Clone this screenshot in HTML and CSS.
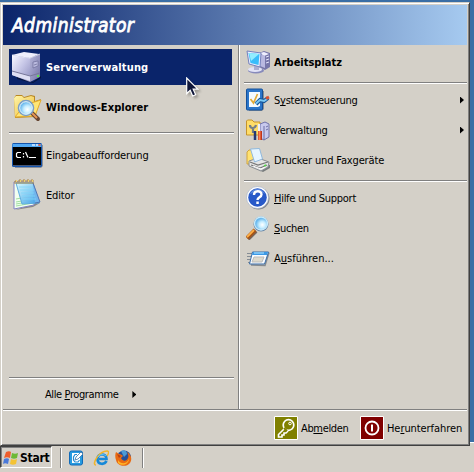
FILE: index.html
```html
<!DOCTYPE html>
<html lang="de">
<head>
<meta charset="utf-8">
<title>Startmenü</title>
<link rel="stylesheet" href="styles.css">
</head>
<body>
<svg class="defs" width="0" height="0" aria-hidden="true">
  <defs>
    <linearGradient id="silver" x2="1" y2="1"><stop stop-color="#f8f8ff"/><stop offset=".5" stop-color="#c5c5e6"/><stop offset="1" stop-color="#8f8fbe"/></linearGradient>
    <linearGradient id="side" x2="1" y2="1"><stop stop-color="#b7b7da"/><stop offset="1" stop-color="#7474a6"/></linearGradient>
    <linearGradient id="gold" x2="1" y2="1"><stop stop-color="#fff5a8"/><stop offset="1" stop-color="#eebc3a"/></linearGradient>
    <linearGradient id="sky" x2="1" y2="1"><stop stop-color="#d9faff"/><stop offset="1" stop-color="#329be9"/></linearGradient>
    <radialGradient id="lens" cx=".6" cy=".6"><stop stop-color="#fff"/><stop offset=".5" stop-color="#c5edff"/><stop offset="1" stop-color="#69b8ee"/></radialGradient>
  </defs>
</svg>
<main class="menu">
  <header class="user">Administrator</header>
  <div class="columns">
    <nav class="programs">
      <a class="program selected">
        <svg width="32" height="32" viewBox="0 0 32 32"><path d="M5 26l16 5 8-6v2l-8 5L5 28z" fill="#05143e"/><path d="M0 4 12 1l15 2-9 4z" fill="#efeffc"/><path d="M0 4l18 3v24L0 24z" fill="url(#silver)"/><path d="M18 7l10-4v23l-10 5z" fill="url(#side)"/><path d="M0 20l18 5v5L0 24z" fill="#dedef3"/><path d="M0 20l18 5 10-3" fill="none" stroke="#777799"/><path d="M21 11l5-1v5l-5 2zM22 14l3-1" fill="#b9b9de" stroke="#74749f" stroke-width=".8"/><path d="M0 4l18 3 10-4" fill="none" stroke="#f8f8ff" stroke-width=".7"/><rect x="25" y="24" width="2" height="2" fill="#5de44b"/></svg>
        <span class="t-server">Serververwaltung</span>
      </a>
      <a class="program">
        <svg width="32" height="32" viewBox="0 0 32 32"><path d="M2 7l2-3h6l2 2 7-2 4 1v5l6-2-6 18-20 1z" fill="#b98825"/><path d="M2 7l2-2h6l2 2 7-2 3 1v19H3z" fill="url(#gold)"/><path d="M3 26l4-5 12-9 10-3-6 16z" fill="#ffe575" stroke="#e4ae2e"/><path d="M20 22l6 6" stroke="#654431" stroke-width="4" stroke-linecap="round"/><path d="M20 22l5 5" stroke="#e69555" stroke-width="2"/><circle cx="14" cy="17" r="7.300" fill="url(#lens)" stroke="#7c9fc5" stroke-width="2"/><circle cx="14" cy="17" r="6.300" fill="none" stroke="#e9faff"/></svg>
        <span class="t-explorer">Windows-Explorer</span>
      </a>
      <hr class="rule">
      <a class="program plain">
        <svg width="32" height="32" viewBox="0 0 32 32"><path d="M3 6h28v21l-2 2H3z" fill="#8a8e98"/><rect y="4" width="30" height="24" rx="1.500" fill="#1354ad"/><path d="M.500 5h29v3H.5z" fill="#50a8f5"/><path d="M20 5h3v2h-3zM24 5h2v2h-2z" fill="#b8dcff"/><path d="M26.500 5h2v2h-2z" fill="#ed6044"/><path d="M1 8h28v18H1z" fill="#000"/><path d="M1 26h28v1H1z" fill="#465675"/><path d="M9 13.500H5.500l-1 1v3l1 1H9M11.500 14v1.500M11.500 17v1.500M13.500 13l2.500 5.500M17 18.500h7" stroke="#fff" stroke-width="1.200" fill="none"/></svg>
        <span class="t-prompt">Eingabeaufforderung</span>
      </a>
      <a class="program plain">
        <svg width="32" height="32" viewBox="0 0 32 32"><path d="M3 31l18-3 7-4-2-2-5 3z" fill="#898985"/><path d="M2 3h19l1 23-20 4z" fill="#f2fff0" stroke="#8385c4"/><path d="M4 23l17-3M4 25l17-3M4 27l17-3M4 20l17-3" stroke="#a1dfa0"/><path d="M4 4h17l6 20-17 1z" fill="url(#sky)" stroke="#57a8df" opacity=".94"/><path d="M21 4l7 19-5 1" fill="#71b6ed" stroke="#5375b2"/><path d="M7 8h14M8 11h14M9 14h13M10 17h13M11 20h13" stroke="#7ed7fa" stroke-width=".8"/><path d="M3 5V2h2v3M7 5V1h2v4M11 5V1h2v4M15 5V1h2v4M19 5V1h2v4" fill="none" stroke="#ad8744"/><path d="M4 2h1M8 2h1M12 2h1M16 2h1M20 2h1" stroke="#ffe36c" stroke-width="1.500"/></svg>
        <span class="t-editor">Editor</span>
      </a>
      <div class="all">
        <hr class="rule">
        <a class="all-link"><span class="t-all">Alle <u>P</u>rogramme</span><i class="arrow"></i></a>
      </div>
    </nav>
    <nav class="places">
      <a class="place computer">
        <svg width="24" height="24" viewBox="0 0 24 24"><path d="M13 3l5-2 6 2v14l-5 3-6-3z" fill="#7777a9"/><path d="M14 3l4-1 5 2-5 2z" fill="#efefff"/><path d="M14 4l5 2v12l-5-2z" fill="#b9b9e0"/><path d="M20 7l3-1M20 10l3-1M20 13l3-1" stroke="#e5e5fc"/><ellipse cx="10" cy="20.500" rx="8" ry="3" fill="#878abb"/><ellipse cx="9" cy="19.500" rx="7" ry="2.500" fill="#e2e3f6"/><path d="M8 15l5 1v4H8z" fill="#acaed1"/><path d="M1 1l14 2-1 14-11-3z" fill="#e8edff" stroke="#7582bd"/><path d="M2.500 3l11 1-1 11-8-2z" fill="#39bdfa"/><path d="M3 3l10 1-8 7z" fill="#91edff"/></svg>
        <span class="t-computer">Arbeitsplatz</span>
      </a>
      <hr class="rule">
      <a class="place">
        <svg width="24" height="24" viewBox="0 0 24 24"><path d="M3 3h15v18l-2 2H3z" fill="#8a8e91"/><rect x=".500" y="1" width="16" height="21" rx="1" fill="#2a75c9" stroke="#145099"/><path d="M3 4h11v14l-2 1H3z" fill="#f4fbff"/><path d="M4.500 11l3 4 4-9" fill="none" stroke="#e1aa36" stroke-width="1.700"/><path d="M10 16l4-4 4 1 4-3" fill="none" stroke="#195799" stroke-width="4"/><path d="M10 15.500l4-3.500 4 1 3-2" fill="none" stroke="#7bcaf5" stroke-width="2"/><path d="M20 10.500l3-1.500" stroke="#d85132" stroke-width="3"/></svg>
        <span class="t-control">S<u>y</u>stemsteuerung</span><i class="arrow"></i>
      </a>
      <a class="place">
        <svg width="24" height="24" viewBox="0 0 24 24"><path d="M.5 3l1-1H6l2 2h6v13H.5z" fill="#ffdd68" stroke="#c5942c"/><path d="M14 6l5-2 4 2v13l-5 3-4-2z" fill="#c8c9ed" stroke="#7072a8"/><path d="M18 8v14M20 9l2-1M20 12l2-1" stroke="#6f70a4"/><path d="M4 7c0 4 5 4 6 0M7 9v6" fill="none" stroke="#747e88" stroke-width="2.200"/><path d="M9 13v9" stroke="#243875" stroke-width="2.500"/><path d="M13 6v8" stroke="#eef0f5" stroke-width="2"/><path d="M14 13v9" stroke="#bd351e" stroke-width="4"/><path d="M13.500 13v9" stroke="#ff8550" stroke-width="2"/></svg>
        <span class="t-admin">Verwaltung</span><i class="arrow"></i>
      </a>
      <a class="place">
        <svg width="24" height="24" viewBox="0 0 24 24"><path d="M1 4l2-2h4l2 2v12H1z" fill="#ffe271" stroke="#d0a442"/><path d="M5 18l12 6 7-4v-3L10 14z" fill="#777b7c"/><path d="M3 13l9-3 11 4-1 5-7 4-12-5z" fill="#e5e6e6" stroke="#898d92"/><path d="M4.500 1l9-.5 3 10.500-8 3z" fill="#e6f5ff" stroke="#91b9dc"/><path d="M4 14l8 3 10-3M5 17l9 3 7-3" fill="none" stroke="#777" stroke-width="1.200"/><path d="M7 18l8 3 4-2" stroke="#fff" fill="none"/><path d="M18 18l2-1" stroke="#58d94d" stroke-width="1.500"/></svg>
        <span class="t-printers">Drucker und Faxgeräte</span>
      </a>
      <hr class="rule">
      <a class="place">
        <svg width="24" height="24" viewBox="0 0 24 24"><circle cx="12.500" cy="12.500" r="11" fill="#85888d"/><circle cx="11.500" cy="11.500" r="11" fill="#fff" stroke="#9aa9c5" stroke-width=".6"/><circle cx="11.500" cy="11.500" r="9.300" fill="#2859c8"/><path d="M4 8c3-7 12-7 15 0-5-3-9-2-15 0" fill="#7da5ed" opacity=".55"/><path d="M8 9C8 4 15.500 4 15.500 8.500c0 3-4 2.500-4 5.500" fill="none" stroke="#fff" stroke-width="2.400"/><rect x="10.300" y="15.500" width="2.500" height="2.500" fill="#fff"/></svg>
        <span class="t-help"><u>H</u>ilfe und Support</span>
      </a>
      <a class="place">
        <svg width="24" height="24" viewBox="0 0 24 24"><path d="M10 15l-8 8" stroke="#77675d" stroke-width="4"/><path d="M9 14l-8 8" stroke="#a55316" stroke-width="4"/><path d="M8 14l-7 7" stroke="#ffaf45" stroke-width="1.800"/><circle cx="15" cy="8" r="7.500" fill="#6686a7"/><circle cx="15" cy="7.500" r="6.500" fill="url(#lens)" stroke="#c9eafa" stroke-width="1.300"/></svg>
        <span class="t-search"><u>S</u>uchen</span>
      </a>
      <a class="place">
        <svg width="24" height="24" viewBox="0 0 24 24"><path d="M5 19l14 .5 4-13" fill="none" stroke="#868b90" stroke-width="1.500"/><path d="M1 7.500h7M1 10.500h6M1 13.500h5M2 16.500h4" stroke="#858c94"/><path d="M6.500 6h16l-4 12H3.500z" fill="#f9fcff" stroke="#376ba7"/><path d="M7 6h15l-1 3H6z" fill="#3c99e6"/><path d="M8 7h10" stroke="#b5e7ff"/><path d="M8 11h10l-2 5H6z" fill="#ddd9cc" stroke="#bbb"/></svg>
        <span class="t-run">A<u>u</u>sführen...</span>
      </a>
    </nav>
  </div>
  <footer class="session">
    <svg width="24" height="24" viewBox="0 0 24 24"><path d="M.5.500h23v23H.5z" fill="#808000" stroke="#fff"/><path d="M11 12L4.500 18.500V21H8v-2h2v-2h2l2-2" fill="none" stroke="#fff" stroke-width="1.600"/><circle cx="14.500" cy="9" r="5.300" fill="#808000" stroke="#fff" stroke-width="1.700"/><circle cx="16" cy="7.500" r="1.300" fill="none" stroke="#fff"/><path d="M10 12l3 3" stroke="#808000" stroke-width="2"/></svg>
    <span class="t-logoff">Ab<u>m</u>elden</span>
    <svg class="power" width="24" height="24" viewBox="0 0 24 24"><path d="M.5.500h23v23H.5z" fill="#800000" stroke="#fff"/><circle cx="12" cy="12" r="6.500" fill="none" stroke="#fff" stroke-width="1.800"/><path d="M12 8.500v7" stroke="#fff" stroke-width="2"/></svg>
    <span class="t-shutdown">He<u>r</u>unterfahren</span>
  </footer>
</main>
<div class="taskbar">
  <button class="start"><svg width="16" height="16" viewBox="0 0 16 16"><path d="M3 2c2-1 4-1 5 0L7 8C5 7 3 7 1 8z" fill="#ee5c2b"/><path d="M9 3c2 1 4 1 6 0l-1 5c-2 1-4 1-6 0z" fill="#6cb936"/><path d="M1 9c2-1 4-1 5 0l-1 5c-2-1-4-1-5 0z" fill="#4a79d9"/><path d="M8 9c2 1 4 1 6 0l-1 5c-2 1-4 1-6 0z" fill="#f4c333"/></svg><span class="t-start">Start</span></button>
  <i class="grip"></i>
  <div class="quick">
    <svg width="16" height="16" viewBox="0 0 16 16"><rect x="1.500" y="1" width="13" height="14" rx="2" fill="#269be0" stroke="#126bb9"/><path d="M4 3h8v10H4z" fill="#fff"/><path d="M9 4.500H7L5.500 7v3L7 12h3l1.500-2" fill="none" stroke="#278bd1" stroke-width="1.200"/><path d="M7 10l1-3 5-5 2 2-5 5z" fill="#fff" stroke="#3975a8" stroke-width=".8"/></svg>
    <svg class="ie" width="16" height="16" viewBox="0 0 16 16"><path d="M13.500 11c-2 4-9 4-9-2s9-6 9 0H6" fill="none" stroke="#1689d8" stroke-width="2.700"/><path d="M3 15C-2 15 6 1 14 1c3 0 1 4 0 5" fill="none" stroke="#efb52b" stroke-width="1.500"/><path d="M5 7c2-3 6-3 8-1" fill="none" stroke="#69c8f5"/></svg>
    <svg width="17" height="16" viewBox="0 0 17 16"><circle cx="9" cy="7.500" r="7" fill="#264f99"/><path d="M6 1c3-2 6 0 6 3L9 7z" fill="#4e9ad4"/><path d="M1 2l3 2c2 0 3 1 4 2L6 8c2 4 6 3 7 0 1-2 0-4-1-6 5 3 5 8 3 11-4 5-13 3-14-3C0 7 0 4 1 2z" fill="#e96a12"/><path d="M3 10c3 5 9 4 11-1 0 5-7 8-11 4z" fill="#ffb326"/><path d="M2 4l2 1 2 1-2 2" fill="#b83b0f"/></svg>
  </div>
  <i class="grip"></i>
</div>
<svg class="pointer" width="13" height="20" viewBox="0 0 13 20"><path d="M.7 1v15.500l3.500-3.300 2.500 5.800 3-1.300-2.500-5.500h4.700z" fill="#10173a" stroke="#fff" stroke-width="1.200"/></svg>
</body>
</html>
```
FILE: styles.css
```css
* { box-sizing: border-box; }
body {
  margin: 0;
  padding-top: 2px;
  width: 474px;
  height: 472px;
  overflow: hidden;
  background: linear-gradient(#3a6ea5 442px, #fff 442px 443px, #d4d0c8 443px);
  font: 11px/14px "DejaVu Sans Condensed", "Noto Sans", sans-serif;
  color: #000;
  cursor: default;
}
svg { display: block; flex: none; }
.defs { position: absolute; }
.pointer { position: absolute; left: 186px; top: 77px; filter: drop-shadow(2px 2px 1px rgba(0, 0, 0, .25)); }
span { white-space: nowrap; }
u { text-decoration: underline; text-underline-offset: 1px; text-decoration-thickness: 1px; text-decoration-skip-ink: none; }

.menu {
  display: flex;
  flex-direction: column;
  width: 470px;
  height: 444px;
  padding: 1px;
  background: #d4d0c8;
  border: 1px solid;
  border-color: #d4d0c8 #404040 #404040 #d4d0c8;
  box-shadow: inset 1px 1px #fff, inset -1px -1px #808080;
}
.user {
  height: 40px;
  flex: none;
  margin: 1px 0 0 1px;
  padding: 0 9px;
  width: 464px;
  background: linear-gradient(90deg, #0a246a, #a6caf0);
  color: #fff;
  font: italic 500 19px/41px "DejaVu Sans Condensed", sans-serif;
  -webkit-text-stroke: .8px #fff;
  letter-spacing: .42px;
}
.columns { display: flex; flex: 1; width: 464px; margin-left: 1px; }
.programs {
  display: flex;
  flex-direction: column;
  width: 236px;
  padding: 4px 4px 0 6px;
  border-right: 1px solid #808080;
}
.programs .program { width: 223px; }
.program {
  display: flex;
  align-items: center;
  gap: 2px;
  height: 36px;
  flex: none;
  margin-bottom: 4px;
  padding-left: 3px;
  font-weight: bold;
}
.program span { padding-top: 2px; }
.program.plain { font-weight: normal; }
.selected { background: #0a246a; color: #fff; }
.rule {
  width: 100%;
  height: 2px;
  flex: none;
  margin: 0;
  border: 0;
  border-top: 1px solid #808080;
  background: #fff;
}
.programs > .rule { margin: 3px 0; }
.all { margin-top: auto; height: 32px; }
.all-link { display: flex; align-items: center; height: 31px; padding-left: 36px; }
.arrow {
  width: 4px;
  height: 7px;
  background: #000;
  clip-path: polygon(0 0, 100% 50%, 0 100%);
}
.all-link .arrow { margin-left: 14px; }
.places { flex: 1; border-left: 1px solid #fff; padding: 2px 0 0 4px; }
.place { display: flex; align-items: center; height: 30px; padding-left: 2px; }
.place span { margin-left: 4px; padding-top: 2px; }
.place .arrow { margin: 0 3px 0 auto; }
.computer { font-weight: bold; }
.places .rule { margin: 5px 0 1px; }
.session {
  display: flex;
  align-items: center;
  width: 464px;
  height: 36px;
  flex: none;
  margin-left: 1px;
  padding: 1px 0 0 271px;
  border-top: 1px solid #808080;
  box-shadow: inset 0 1px #fff;
  margin-bottom: -1px;
}
.session span { width: 59px; margin-left: 3px; padding-top: 2px; }
.session .t-shutdown { width: 78px; }

.t-server { letter-spacing: .15px; }
.t-explorer { letter-spacing: .06px; }
.t-prompt { letter-spacing: -.1px; }
.t-editor { letter-spacing: -.15px; }
.t-all { letter-spacing: -.4px; }
.t-control { letter-spacing: -.25px; }
.t-admin { letter-spacing: -.2px; }
.t-printers { letter-spacing: -.14px; }
.t-help { letter-spacing: -.28px; }
.t-search { letter-spacing: -.3px; }
.t-logoff { letter-spacing: -.35px; }
.t-shutdown { letter-spacing: -.08px; }

.taskbar { display: flex; height: 26px; background: #d4d0c8; }
.start {
  display: flex;
  align-items: center;
  width: 52px;
  height: 22px;
  padding: 1px 0 0 2px;
  border: 1px solid;
  border-color: #404040 #fff #fff #404040;
  box-shadow: inset 1px 1px #808080;
  background: #d4d0c8;
  color: #000;
  font: bold 12px/14px "DejaVu Sans Condensed", sans-serif;
}
.start span { margin-left: 1px; letter-spacing: -.25px; }
.grip { width: 2px; height: 20px; margin: 2px 0 0 8px; background: linear-gradient(90deg, #808080 50%, #fff 50%); }
.quick { display: flex; padding: 4px 0 0 6px; width: 72px; }
.ie { margin: 0 6px 0 9px; }
```
